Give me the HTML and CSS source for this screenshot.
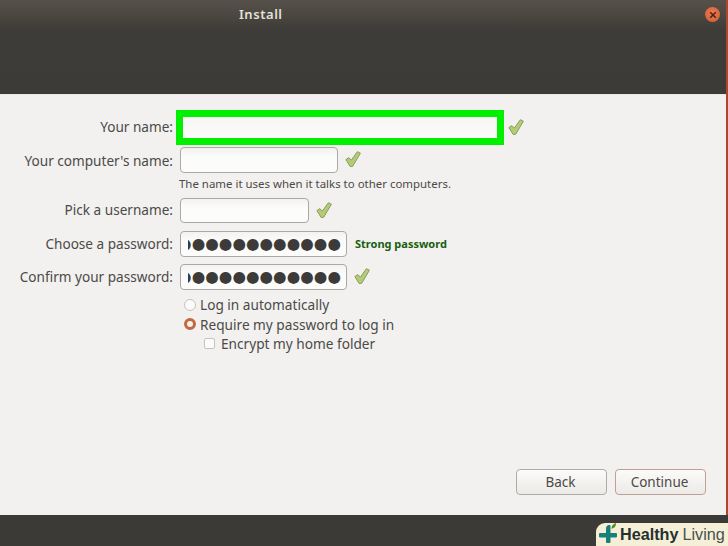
FILE: index.html
```html
<!DOCTYPE html>
<html lang="en">
<head>
<meta charset="utf-8">
<title>Install</title>
<link rel="stylesheet" href="styles.css">
</head>
<body>
<svg class="defs" width="0" height="0" aria-hidden="true">
  <symbol id="tick" viewBox="0 0 16 16">
    <path d="M.9 8.6 L3.9 6.6 L6.3 9.2 L12.4 .7 L15.4 2.2 L7.6 15.4 L5.1 15.4 Z" fill="#b4cc78" stroke="#8a9c58" stroke-width="1" stroke-linejoin="round"/>
  </symbol>
</svg>
<div class="window">
  <header class="titlebar">
    <h1 class="title">Install</h1>
    <span class="close"><svg width="8" height="8" viewBox="0 0 8 8"><path d="M1.2 1.2 L6.8 6.8 M6.8 1.2 L1.2 6.8" stroke="#4a2114" stroke-width="1.5"/></svg></span>
  </header>
  <main class="content">
    <form class="form">
      <div class="row row-name">
        <label class="label">Your name:</label>
        <div class="cell">
          <div class="highlight"></div>
          <svg class="tick tick-name"><use href="#tick"/></svg>
        </div>
      </div>
      <div class="row row-computer">
        <label class="label">Your computer's name:</label>
        <div class="cell">
          <div class="entry w-computer"></div>
          <svg class="tick"><use href="#tick"/></svg>
        </div>
      </div>
      <p class="hint">The name it uses when it talks to other computers.</p>
      <div class="row row-user">
        <label class="label">Pick a username:</label>
        <div class="cell">
          <div class="entry w-user"></div>
          <svg class="tick"><use href="#tick"/></svg>
        </div>
      </div>
      <div class="row row-pass">
        <label class="label">Choose a password:</label>
        <div class="cell">
          <div class="entry w-pass"><span class="dots">●●●●●●●●●●●●●</span></div>
          <span class="strength">Strong password</span>
        </div>
      </div>
      <div class="row row-confirm">
        <label class="label">Confirm your password:</label>
        <div class="cell">
          <div class="entry w-pass"><span class="dots">●●●●●●●●●●●●●</span></div>
          <svg class="tick"><use href="#tick"/></svg>
        </div>
      </div>
      <div class="options">
        <div class="option"><span class="radio"></span>Log in automatically</div>
        <div class="option"><span class="radio radio-on"></span>Require my password to log in</div>
        <div class="option option-sub"><span class="check"></span>Encrypt my home folder</div>
      </div>
    </form>
    <div class="actions">
      <button class="btn" type="button">Back</button>
      <button class="btn btn-primary" type="button">Continue</button>
    </div>
  </main>
</div>
<footer class="footer"></footer>
<div class="badge">
  <svg class="badge-logo" width="24" height="23" viewBox="0 0 24 23">
    <path d="M12 2 H13.6 Q14.5 2 14.5 3 V10 H20 Q21 10 21 11 V13.5 Q21 14.5 20 14.5 H14.5 V19 Q14.5 20 13.5 20 H11 Q10 20 10 19 V14.5 H4 Q3 14.5 3 13.5 V11 Q3 10 4 10 H10 V5 Q10 3.6 12 2 Z" fill="#16807c"/>
    <path d="M15.5 5.5 C15.5 2.5 17.5 1 20 0 C20 3 18.5 5.5 15.5 5.5 Z" fill="#4f8a2b"/>
  </svg>
  <span class="brand-a">Healthy</span><span class="brand-b">Living</span>
</div>
</body>
</html>
```
FILE: styles.css
```css
* { box-sizing: border-box; }
html, body { margin: 0; padding: 0; }
body {
  width: 728px;
  height: 546px;
  overflow: hidden;
  position: relative;
  display: flex;
  flex-direction: column;
  font-family: "Noto Sans", "Open Sans", sans-serif;
  background: #3b3a36;
}
.defs { position: absolute; }
.window {
  height: 515px;
  display: flex;
  flex-direction: column;
  border-right: 2px solid #a9482a;
}
.titlebar {
  height: 95px;
  flex: none;
  position: relative;
  display: flex;
  justify-content: center;
  padding: 6px 0 0 0;
  background: linear-gradient(#55514a 0, #4f4b44 10px, #3e3c38 30px, #3c3b37 100%);
  border-bottom: 1px solid #e9e7e4;
}
.title {
  margin: 0;
  width: 100%;
  padding-left: 239px;
  font-size: 13px;
  line-height: 17px;
  font-weight: 600;
  letter-spacing: .55px;
  color: #e4e1da;
}
.close {
  position: absolute;
  left: 705px;
  top: 7px;
  width: 15px;
  height: 15px;
  border-radius: 50%;
  display: flex;
  align-items: center;
  justify-content: center;
  background: radial-gradient(circle at 50% 40%, #ee7a4f, #cf5a33);
}
.content {
  flex: 1;
  display: flex;
  flex-direction: column;
  background: #f2f1ef;
  padding-top: 15px;
}
.form { flex: 1; }
.row {
  display: grid;
  grid-template-columns: 173px 1fr;
  align-items: center;
}
.label {
  text-align: right;
  font-size: 13.6px;
  color: #4c4a47;
  white-space: nowrap;
}
.cell {
  display: flex;
  align-items: center;
  height: 100%;
  padding-left: 7px;
}
.row-name { height: 35px; }
.row-name .label { padding-bottom: 2px; }
.row-name .cell { padding-left: 3px; }
.row-computer { height: 26px; margin-top: 2px; }
.row-user { height: 25px; margin-top: 5px; }
.row-user .label { padding-bottom: 2px; }
.row-pass { height: 26px; margin-top: 8px; }
.row-pass .label { padding-bottom: 2px; }
.row-confirm { height: 26px; margin-top: 7px; }
.row-confirm .label { padding-bottom: 1px; }
.highlight {
  width: 328px;
  height: 35px;
  border: 7px solid #00f000;
  background: linear-gradient(#f7f6f5, #fbfbfa);
}
.entry {
  height: 100%;
  display: flex;
  align-items: center;
  justify-content: flex-end;
  overflow: hidden;
  border: 1px solid #aaa9a5;
  border-radius: 4px;
  background: linear-gradient(#f3f2f1, #fcfcfb 40%);
}
.w-computer { width: 158px; }
.w-user { width: 129px; }
.w-pass { width: 167px; padding: 0 5px 0 7px; }
.dots {
  display: flex;
  justify-content: flex-end;
  width: 100%;
  overflow: hidden;
  font-family: "DejaVu Sans", sans-serif;
  font-size: 15.5px;
  line-height: 20px;
  letter-spacing: .05px;
  color: #3c3b39;
  white-space: nowrap;
}
.tick {
  width: 16px;
  height: 16px;
  margin-left: 7px;
  margin-bottom: 2px;
  flex: none;
}
.tick-name { margin-left: 4px; }
.hint {
  margin: 3px 0 0 179px;
  height: 17px;
  font-size: 11.45px;
  line-height: 16px;
  color: #4c4a47;
}
.strength {
  margin-left: 8px;
  margin-bottom: 2px;
  font-size: 11px;
  font-weight: 700;
  color: #186010;
  white-space: nowrap;
}
.options {
  margin: 5px 0 0 184px;
  font-size: 13.65px;
  color: #4c4a47;
}
.option {
  height: 19.5px;
  display: flex;
  align-items: center;
}
.option-sub { margin-left: 20px; }
.radio {
  width: 12px;
  height: 12px;
  margin-right: 4px;
  border-radius: 50%;
  border: 1px solid #c4c3bf;
  background: #fbfbfa;
}
.radio-on {
  border: 3px solid #bf6a41;
  background: #f8efe9;
}
.check {
  width: 11px;
  height: 11px;
  margin-right: 6px;
  border-radius: 2px;
  border: 1px solid #c4c3bf;
  background: #fbfbfa;
}
.actions {
  display: flex;
  justify-content: flex-end;
  gap: 8px;
  padding: 0 20px 20px 0;
}
.btn {
  width: 91px;
  height: 26px;
  padding: 0 2px 0 0;
  font-family: inherit;
  font-size: 13.5px;
  color: #4c4a47;
  border: 1px solid #aeaca8;
  border-radius: 4px;
  background: linear-gradient(#fbfbfa, #eceae7);
}
.btn-primary { border-color: #bfa094; }
.footer { flex: 1; }
.badge {
  position: absolute;
  left: 596px;
  top: 523px;
  width: 132px;
  height: 23px;
  display: flex;
  align-items: center;
  padding-left: 24px;
  border-radius: 9px 0 0 0;
  background: #f6efd8;
  font-family: "Liberation Sans", sans-serif;
  font-size: 16.2px;
  white-space: nowrap;
}
.badge-logo {
  position: absolute;
  left: 0;
  top: 0;
}
.brand-a { font-weight: 700; color: #25302f; }
.brand-b { margin-left: 4px; color: #47514f; }
```
